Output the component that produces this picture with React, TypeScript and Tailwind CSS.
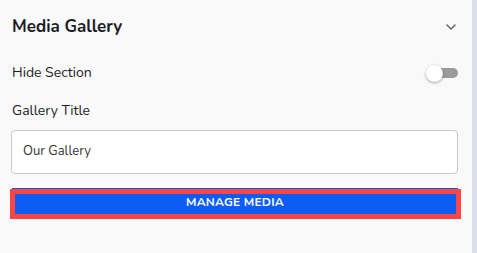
import React from "react";

export default function App() {
  return (
    <div
      className="w-[477px] h-[253px] flex bg-[#f9f9f9] text-[#1c1c28]"
      style={{ fontFamily: "Nunito, Lato, 'Noto Sans', sans-serif" }}
    >
      <div className="flex-1 flex flex-col pl-[11px] pr-[14px]">
        <div className="h-[52px] flex items-center justify-between">
          <div className="text-[17px] font-bold leading-none ml-[1px]">Media Gallery</div>
          <svg width="10" height="6" viewBox="0 0 10 6" className="mr-[2px] mt-[1px]">
            <path d="M1 1 L5 5 L9 1" fill="none" stroke="#666" strokeWidth="1.5" strokeLinecap="round" strokeLinejoin="round" />
          </svg>
        </div>
        <div className="h-[40px] mt-[1px] flex items-center justify-between">
          <div className="text-[14px] leading-[20px] ml-[1px]">Hide Section</div>
          <div className="relative w-[32px] h-[17px]">
            <div className="absolute right-0 top-[3.5px] w-[28px] h-[10px] rounded-full bg-[#9b9b9b]" />
            <div className="absolute left-0 top-0 w-[17px] h-[17px] rounded-full bg-white shadow-[0_1px_3px_rgba(0,0,0,0.35)]" />
          </div>
        </div>
        <div className="text-[14px] leading-[20px] mt-[8px] ml-[1px]">Gallery Title</div>
        <div className="mt-[9px] h-[44px] rounded-[4px] border border-[#c8c8c8] bg-white flex items-center px-[11px] text-[13px] text-[#333]">
          Our Gallery
        </div>
        <div className="relative mt-[14px] ml-[1px] h-[28px] bg-[#0d5cf4] flex items-center justify-center">
          <span className="text-white text-[12px] font-bold tracking-[0.2px]">MANAGE MEDIA</span>
          <div className="absolute -left-[2px] top-[1px] -right-[3px] -bottom-[3px] border-[5px] border-[#fe4545]" />
        </div>
      </div>
      <div className="w-[5px] bg-[#d9dee9]" />
    </div>
  );
}
